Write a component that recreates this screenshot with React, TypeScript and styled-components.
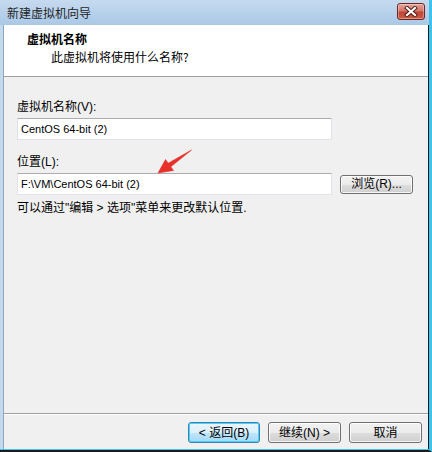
import React from "react";
import styled, { createGlobalStyle } from "styled-components";

const Global = createGlobalStyle`
  html, body { margin: 0; padding: 0; background: #ffffff; }
  body { font-family: "Liberation Sans", "Noto Sans CJK SC", sans-serif; font-size: 12px; color: #000; }
  * { box-sizing: border-box; }
`;

const Window = styled.div`
  position: relative;
  width: 432px;
  height: 452px;
  display: flex;
  flex-direction: column;
  background: #c4d9ee;
  border-right: 3px solid #3cc3ee;
  border-bottom: 2px solid #1c1c1c;
  overflow: hidden;
`;

const TitleBar = styled.div`
  height: 25px;
  flex: none;
  display: flex;
  align-items: center;
  justify-content: space-between;
  padding: 0 4px 0 7px;
  background: linear-gradient(#c6daef, #aac8e6);
  border-top-right-radius: 6px;
`;

const TitleText = styled.span`
  font-family: "Noto Sans CJK SC", sans-serif;
  font-size: 12px;
  color: #1e1e1e;
  line-height: 14px;
`;

const CloseButton = styled.div`
  width: 28px;
  height: 17px;
  margin-top: -3px;
  border: 1px solid #6e2620;
  border-radius: 3px;
  background: linear-gradient(#e5a69c 0%, #d47569 45%, #c04534 55%, #cb5b45 100%);
  display: flex;
  align-items: center;
  justify-content: center;
  box-shadow: inset 0 0 0 1px rgba(255, 255, 255, 0.35);
`;

const Frame = styled.div`
  flex: 1;
  display: flex;
  padding-left: 3px;
  border-bottom: 1px solid #3cc3ee;
`;

const Client = styled.div`
  flex: 1;
  display: flex;
  flex-direction: column;
  background: #f0f0f0;
  border-left: 1px solid #8fa6bf;
  border-right: 1px solid #1a1a1a;
`;

const Header = styled.div`
  height: 52px;
  flex: none;
  background: #ffffff;
  padding: 7px 0 0 23px;
  display: flex;
  flex-direction: column;
  gap: 4px;
  border-bottom: 1px solid #a0a0a0;
  font-family: "Noto Sans CJK SC", sans-serif;
`;

const HeaderTitle = styled.div`
  font-weight: bold;
  font-size: 12px;
  line-height: 14px;
`;

const HeaderSub = styled.div`
  font-size: 12px;
  line-height: 14px;
  padding-left: 24px;
`;

const Body = styled.div`
  position: relative;
  flex: 1;
  display: flex;
  flex-direction: column;
  padding: 23px 0 0 13px;
`;

const Label = styled.div<{ $top?: number }>`
  font-size: 12px;
  line-height: 14px;
  margin-top: ${(p) => p.$top ?? 0}px;
  margin-bottom: 4px;
`;

const Row = styled.div`
  display: flex;
  align-items: center;
  gap: 8px;
`;

const TextBox = styled.div`
  width: 315px;
  height: 22px;
  background: #ffffff;
  border: 1px solid #e2e3ea;
  border-top-color: #abadb3;
  padding-left: 3px;
  display: flex;
  align-items: center;
  font-family: "Liberation Sans", "Noto Sans CJK SC", sans-serif;
  font-size: 11px;
`;

const Button = styled.div<{ $default?: boolean; $w?: number; $h?: number }>`
  width: ${(p) => p.$w ?? 73}px;
  height: ${(p) => p.$h ?? 21}px;
  display: flex;
  align-items: center;
  justify-content: center;
  font-size: 12px;
  line-height: 14px;
  border-radius: 3px;
  border: 1px solid ${(p) => (p.$default ? "#3c7fb1" : "#707070")};
  background: ${(p) =>
    p.$default
      ? "linear-gradient(#eaf6fd 0%, #d9f0fc 50%, #bee6fd 51%, #a7d9f5 100%)"
      : "linear-gradient(#f2f2f2 0%, #ebebeb 50%, #dddddd 51%, #cfcfcf 100%)"};
  box-shadow: ${(p) =>
    p.$default
      ? "inset 0 0 0 1px #48d2f8"
      : "inset 0 0 0 1px rgba(255,255,255,0.8)"};
`;

const Hint = styled.div`
  margin-top: 6px;
  font-size: 12px;
  line-height: 14px;
`;

const Spacer = styled.div`
  flex: 1;
`;

const Separator = styled.div`
  height: 2px;
  margin-left: -13px;
  border-top: 1px solid #a0a0a0;
  border-bottom: 1px solid #ffffff;
`;

const Footer = styled.div`
  height: 34px;
  margin-left: -13px;
  display: flex;
  justify-content: flex-end;
  align-items: flex-start;
  padding: 7px 6px 0 0;
  gap: 8px;
`;

const Arrow = styled.svg`
  position: absolute;
  left: 0;
  top: 0;
  overflow: visible;
  pointer-events: none;
`;

export default function App() {
  return (
    <>
      <Global />
      <Window>
        <TitleBar>
          <TitleText>新建虚拟机向导</TitleText>
          <CloseButton>
            <svg width="14" height="11" viewBox="0 0 14 11">
              <path d="M3 2 L11 9 M11 2 L3 9" stroke="#4a1a14" strokeWidth="4" strokeLinecap="square" />
              <path d="M3 2 L11 9 M11 2 L3 9" stroke="#ffffff" strokeWidth="2.2" strokeLinecap="square" />
            </svg>
          </CloseButton>
        </TitleBar>
        <Frame>
          <Client>
            <Header>
              <HeaderTitle>虚拟机名称</HeaderTitle>
              <HeaderSub>此虚拟机将使用什么名称?</HeaderSub>
            </Header>
            <Body>
              <Label>虚拟机名称(V):</Label>
              <TextBox>CentOS 64-bit (2)</TextBox>
              <Label $top={15}>位置(L):</Label>
              <Row>
                <TextBox>F:\VM\CentOS 64-bit (2)</TextBox>
                <Button $w={73} $h={19}>浏览(R)...</Button>
              </Row>
              <Hint>可以通过"编辑 &gt; 选项"菜单来更改默认位置.</Hint>
              <Spacer />
              <Separator />
              <Footer>
                <Button $default $w={72}>&lt; 返回(B)</Button>
                <Button>继续(N) &gt;</Button>
                <Button>取消</Button>
              </Footer>
              <Arrow width="1" height="1">
                <polygon
                  points="154,96 161.5,82.5 164.2,86.2 187.5,73 166.8,89.8 169.5,93.5"
                  fill="#e8302a"
                  stroke="#e8302a"
                  strokeWidth="0.6"
                  strokeLinejoin="round"
                />
              </Arrow>
            </Body>
          </Client>
        </Frame>
      </Window>
    </>
  );
}
